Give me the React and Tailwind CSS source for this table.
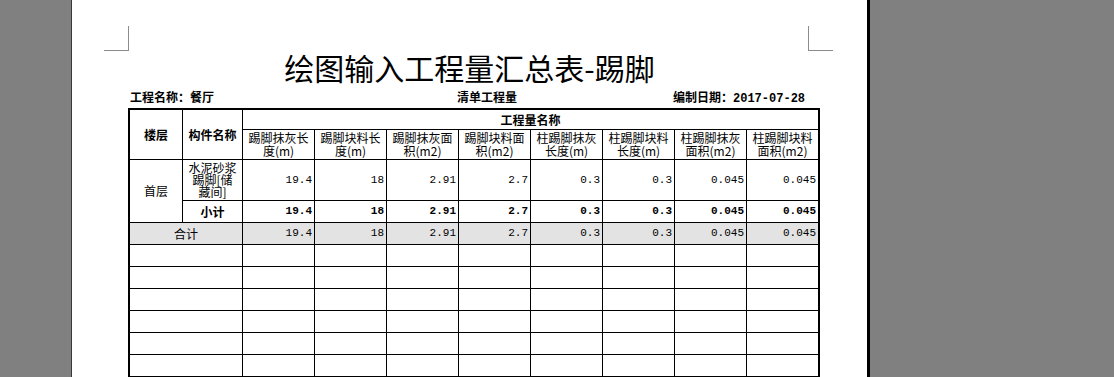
import React from 'react'

const cjk = "font-['Noto_Sans_CJK_SC','Noto_Sans_CJK_JP',sans-serif]"
const mono = "font-['Liberation_Mono','Noto_Sans_CJK_SC',monospace]"

const headers = [
  ['踢脚抹灰长', '度(m)'],
  ['踢脚块料长', '度(m)'],
  ['踢脚抹灰面', '积(m2)'],
  ['踢脚块料面', '积(m2)'],
  ['柱踢脚抹灰', '长度(m)'],
  ['柱踢脚块料', '长度(m)'],
  ['柱踢脚抹灰', '面积(m2)'],
  ['柱踢脚块料', '面积(m2)'],
]

const values = ['19.4', '18', '2.91', '2.7', '0.3', '0.3', '0.045', '0.045']

const cell = 'border-r border-b border-black flex items-center'

export default function App() {
  return (
    <div className={`flex h-[377px] w-[1114px] overflow-hidden bg-[#808080] text-black ${cjk}`}>
      <div className="ml-[71px] w-[799px] shrink-0 border-l border-l-[#3a3a3a] border-r-[3px] border-r-black bg-white">
        {/* crop marks */}
        <div className="flex pt-[26px]">
          <div className="ml-[32px] h-[25px] w-[25px] border-r border-b border-[#8c8c8c]" />
          <div className="ml-[679px] h-[25px] w-[25px] border-l border-b border-[#8c8c8c]" />
        </div>

        <div className="mt-[1px] h-[30px] text-center text-[30px] leading-[30px]">
          绘图输入工程量汇总表-踢脚
        </div>

        <div className="mt-[9px] flex h-[12px] pl-[58px] text-[12px] font-bold leading-[12px]">
          <div className="w-[327px]">工程名称：餐厅</div>
          <div className="w-[216px]">清单工程量</div>
          <div>
            编制日期：<span className={mono}>2017-07-28</span>
          </div>
        </div>

        <div className="ml-[56px] mt-[5px] grid w-[692px] grid-cols-[53px_60px_72px_72px_72px_72px_72px_72px_72px_72px] grid-rows-[20px_30px_41px_22px_22px_22px_22px_22px_22px_22px_22px] border-t-2 border-l-2 border-r border-b border-black text-[12px]">
          <div className={`${cell} row-span-2 justify-center font-bold`}>楼层</div>
          <div className={`${cell} row-span-2 justify-center font-bold`}>构件名称</div>
          <div className={`${cell} col-span-8 justify-center font-bold`}>工程量名称</div>
          {headers.map((h, i) => (
            <div key={i} className={`${cell} flex-col justify-center text-center leading-[12.5px]`}>
              <span>{h[0]}</span>
              <span>{h[1]}</span>
            </div>
          ))}

          <div className={`${cell} row-span-2 justify-center`}>首层</div>
          <div className={`${cell} flex-col justify-center text-center leading-[12px]`}>
            <span>水泥砂浆</span>
            <span>踢脚[储</span>
            <span>藏间]</span>
          </div>
          {values.map((v, i) => (
            <div key={i} className={`${cell} justify-end pr-[2px] text-[11px] ${mono}`}>{v}</div>
          ))}

          <div className={`${cell} justify-center font-bold`}>小计</div>
          {values.map((v, i) => (
            <div key={i} className={`${cell} justify-end pr-[2px] text-[11px] font-bold ${mono}`}>{v}</div>
          ))}

          <div className={`${cell} col-span-2 justify-center bg-[#e3e3e3]`}>合计</div>
          {values.map((v, i) => (
            <div key={i} className={`${cell} justify-end bg-[#e3e3e3] pr-[2px] text-[11px] ${mono}`}>{v}</div>
          ))}

          {[0, 1, 2, 3, 4, 5].map((r) => (
            <React.Fragment key={r}>
              <div className={`${cell} col-span-2`} />
              {values.map((_, i) => (
                <div key={i} className={cell} />
              ))}
            </React.Fragment>
          ))}
        </div>
      </div>
    </div>
  )
}
